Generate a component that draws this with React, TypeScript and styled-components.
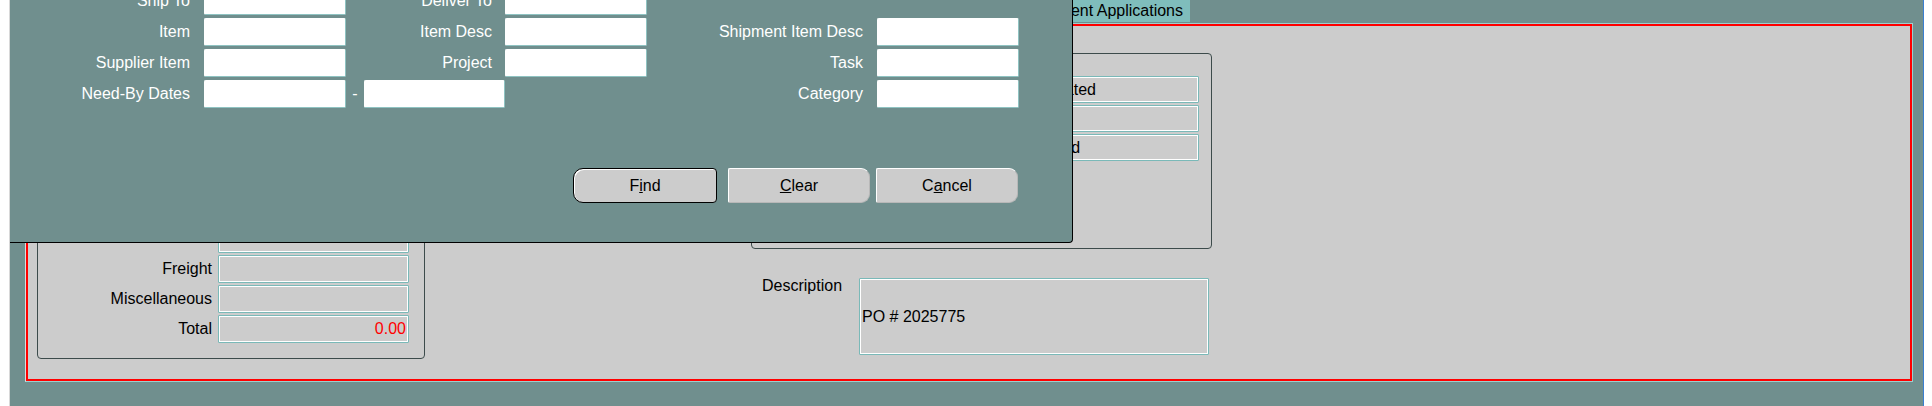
import React from "react";
import styled, { createGlobalStyle } from "styled-components";

const GlobalStyle = createGlobalStyle`
  html, body { margin: 0; padding: 0; background: #ffffff; overflow: hidden; }
  body { font-family: "Liberation Sans", Arial, sans-serif; font-size: 16px; }
  * { box-sizing: border-box; }
`;

const TEAL = "#708f8e";
const LIGHT_TEAL = "#7fbdbc";
const GREY = "#cccccc";

const Screen = styled.div`
  position: relative;
  width: 1932px;
  height: 406px;
  overflow: hidden;
  background: #ffffff;
`;

const Frame = styled.div`
  margin-left: 9px;
  width: 1915px;
  height: 406px;
  background: ${TEAL};
  border-left: 1px solid #d8d8d8;
  border-right: 1px solid #3b7fd0;
  display: flex;
  flex-direction: column;
`;

const TabStrip = styled.div`
  height: 23px;
  display: flex;
  padding-left: 940px;
`;

const Tab = styled.div`
  width: 240px;
  height: 22px;
  background: ${LIGHT_TEAL};
  color: #000;
  line-height: 22px;
  text-align: right;
  padding-right: 7px;
  white-space: nowrap;
  overflow: hidden;
`;

const Canvas = styled.div`
  margin-left: 15px;
  width: 1888px;
  height: 359px;
  border: 1px solid #9ccfce;
  border-left-color: #dcdcdc;
`;

const Highlight = styled.div`
  height: 100%;
  border: 2px solid #ff0000;
  background: ${GREY};
  display: flex;
  align-items: flex-start;
`;

const Box = styled.div`
  border: 1px solid #3c4b4b;
  border-radius: 4px;
`;

const TotalsBox = styled(Box)`
  margin-left: 9px;
  margin-bottom: 20px;
  align-self: flex-end;
  width: 388px;
  padding: 42px 15px 15px 8px;
  display: grid;
  grid-template-columns: 1fr 191px;
  grid-auto-rows: 28px;
  column-gap: 6px;
  row-gap: 2px;
`;

const Label = styled.span`
  color: #000;
  line-height: 28px;
  text-align: right;
  white-space: nowrap;
`;

const Field = styled.div<{ $w?: number; $h?: number; $align?: string; $color?: string }>`
  width: ${(p) => (p.$w ? `${p.$w}px` : "auto")};
  height: ${(p) => (p.$h ? `${p.$h}px` : "28px")};
  background: ${GREY};
  border: 1px solid #7ab9b8;
  box-shadow: inset 1px 1px 0 #ffffff, inset -1px -1px 0 #ffffff;
  border-radius: 1px;
  display: flex;
  align-items: center;
  justify-content: ${(p) => (p.$align === "right" ? "flex-end" : "flex-start")};
  padding: 0 2px;
  color: ${(p) => p.$color || "#000"};
  white-space: nowrap;
  overflow: hidden;
`;

const RightCol = styled.div`
  margin-left: 326px;
  display: flex;
  flex-direction: column;
`;

const StatusBox = styled(Box)`
  margin-top: 27px;
  width: 461px;
  height: 196px;
  padding: 22px 12px 0 0;
  display: flex;
  flex-direction: column;
  align-items: flex-end;
  gap: 2px;
`;

const DescRow = styled.div`
  margin-top: 29px;
  display: flex;
  align-items: flex-start;
`;

const DescLabel = styled.span`
  margin-left: 11px;
  margin-top: -1px;
  width: 97px;
  line-height: 18px;
  color: #000;
`;

/* ---------- Find dialog (overlapping window) ---------- */

const Dialog = styled.div`
  position: absolute;
  left: 10px;
  top: -30px;
  width: 1063px;
  height: 273px;
  z-index: 2;
  background: ${TEAL};
  border-right: 1px solid #000;
  border-bottom: 1px solid #000;
  border-bottom-right-radius: 4px;
  padding-top: 17px;
`;

const FormGrid = styled.div`
  display: grid;
  grid-template-columns: 180px 14px 142px 18px 128px 13px 142px 216px 14px 142px;
  grid-auto-rows: 28px;
  row-gap: 3px;
`;

const DLabel = styled.span<{ $col: number; $row: number }>`
  grid-column: ${(p) => p.$col};
  grid-row: ${(p) => p.$row};
  color: #ffffff;
  line-height: 28px;
  text-align: right;
  white-space: nowrap;
`;

const Dash = styled(DLabel)`
  text-align: center;
`;

const DField = styled.div<{ $col: number; $row: number; $span?: number }>`
  grid-column: ${(p) => p.$col} / span ${(p) => p.$span || 1};
  grid-row: ${(p) => p.$row};
  background: #ffffff;
  border: 1px solid #ffffff;
  border-right-color: #8fc3c2;
  border-bottom-color: #8fc3c2;
  border-radius: 2px;
`;

const ButtonRow = styled.div`
  margin-top: 60px;
  display: flex;
  justify-content: flex-end;
  padding-right: 54px;
  gap: 6px;
`;

const Button = styled.button<{ $default?: boolean }>`
  width: ${(p) => (p.$default ? "144px" : "142px")};
  height: 35px;
  margin-right: ${(p) => (p.$default ? "5px" : "0")};
  background: ${GREY};
  color: #000;
  font-family: "Liberation Sans", Arial, sans-serif;
  font-size: 16px;
  padding: 0;
  cursor: default;
  border: 1px solid ${(p) => (p.$default ? "#000" : "#ffffff")};
  border-right-color: ${(p) => (p.$default ? "#000" : "#b8b8b8")};
  border-bottom-color: ${(p) => (p.$default ? "#000" : "#b8b8b8")};
  border-radius: ${(p) => (p.$default ? "10px 4px 4px 10px" : "2px 9px 9px 2px")};
  box-shadow: ${(p) => (p.$default ? "inset 1px 1px 0 #ffffff" : "none")};
`;

export default function App() {
  return (
    <Screen>
      <GlobalStyle />
      <Frame>
        <TabStrip>
          <Tab>View Prepayment Applications</Tab>
        </TabStrip>
        <Canvas>
          <Highlight>
            <TotalsBox>
              <Label />
              <Field />
              <Label>Freight</Label>
              <Field />
              <Label>Miscellaneous</Label>
              <Field />
              <Label>Total</Label>
              <Field $align="right" $color="#ff0000">0.00</Field>
            </TotalsBox>
            <RightCol>
              <StatusBox>
                <Field $w={176} $h={27}>&nbsp;Validated</Field>
                <Field $w={176} $h={27} />
                <Field $w={176} $h={27}>&nbsp;Closed</Field>
              </StatusBox>
              <DescRow>
                <DescLabel>Description</DescLabel>
                <Field $w={350} $h={77}>PO # 2025775</Field>
              </DescRow>
            </RightCol>
          </Highlight>
        </Canvas>
      </Frame>

      <Dialog>
        <FormGrid>
          <DLabel $col={1} $row={1}>Ship To</DLabel>
          <DField $col={3} $row={1} />
          <DLabel $col={5} $row={1}>Deliver To</DLabel>
          <DField $col={7} $row={1} />

          <DLabel $col={1} $row={2}>Item</DLabel>
          <DField $col={3} $row={2} />
          <DLabel $col={5} $row={2}>Item Desc</DLabel>
          <DField $col={7} $row={2} />
          <DLabel $col={8} $row={2}>Shipment Item Desc</DLabel>
          <DField $col={10} $row={2} />

          <DLabel $col={1} $row={3}>Supplier Item</DLabel>
          <DField $col={3} $row={3} />
          <DLabel $col={5} $row={3}>Project</DLabel>
          <DField $col={7} $row={3} />
          <DLabel $col={8} $row={3}>Task</DLabel>
          <DField $col={10} $row={3} />

          <DLabel $col={1} $row={4}>Need-By Dates</DLabel>
          <DField $col={3} $row={4} />
          <Dash $col={4} $row={4}>-</Dash>
          <DField $col={5} $row={4} $span={2} />
          <DLabel $col={8} $row={4}>Category</DLabel>
          <DField $col={10} $row={4} />
        </FormGrid>
        <ButtonRow>
          <Button $default>F<u>i</u>nd</Button>
          <Button><u>C</u>lear</Button>
          <Button>C<u>a</u>ncel</Button>
        </ButtonRow>
      </Dialog>
    </Screen>
  );
}
